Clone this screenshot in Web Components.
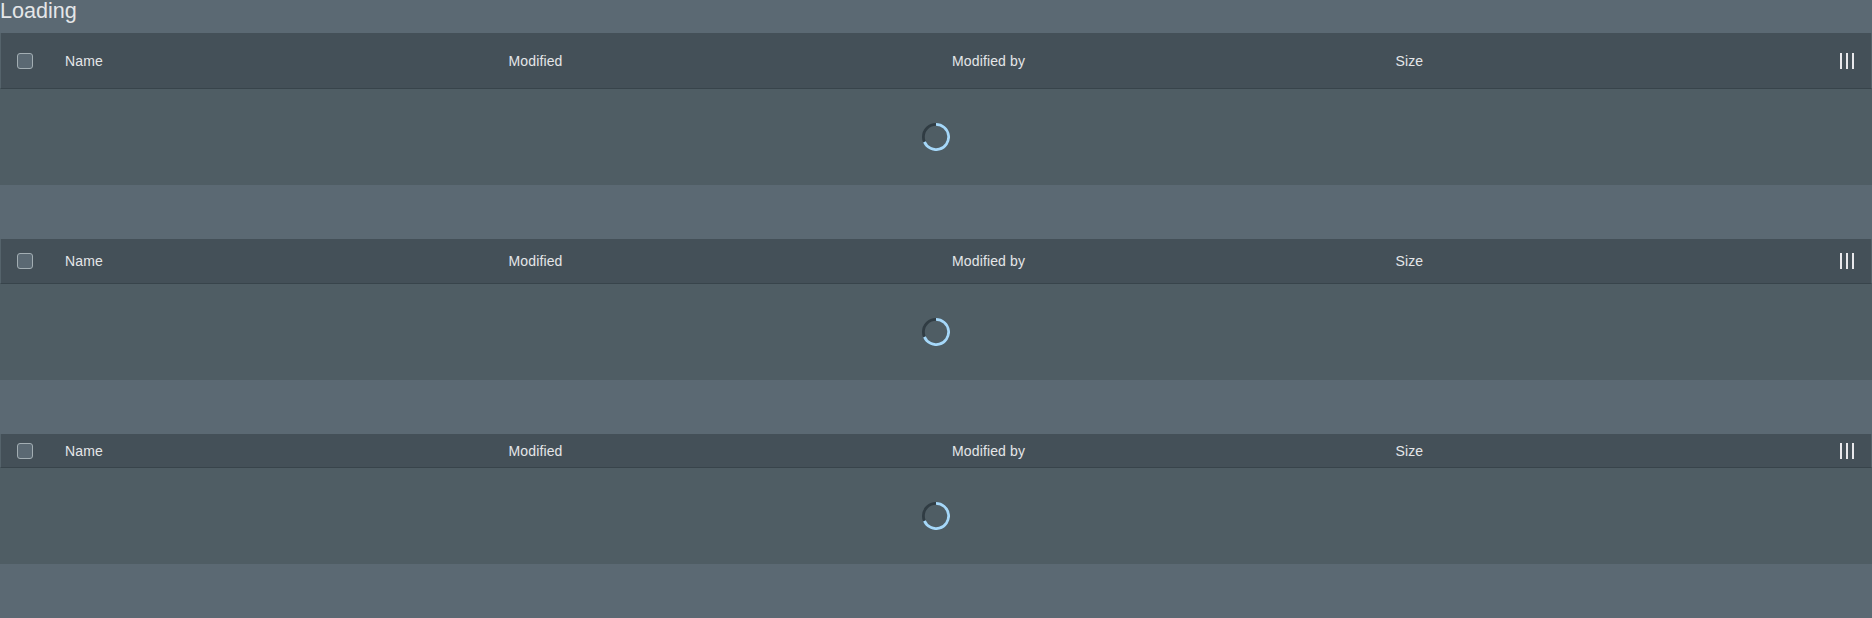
<!DOCTYPE html>
<html lang="en">
<head>
<meta charset="utf-8">
<title>Loading</title>
<style>
html, body { margin: 0; background: #5b6973; color: #e4e6e8; font-family: "Liberation Sans", Arial, sans-serif; }
</style>
</head>
<body>
<loading-page></loading-page>
<script>
const define = (name, html) => customElements.define(name, class extends HTMLElement {
  constructor() {
    super();
    this.attachShadow({ mode: "open" }).innerHTML = html;
  }
});

define("check-box", `<style>
:host { display: block; box-sizing: border-box; width: 16px; height: 16px; border: 1px solid #a3aeb3; border-radius: 3px; background: #5b6973; }
</style>`);

define("columns-icon", `<style>
:host { display: block; width: 16px; height: 16px; }
svg { display: block; fill: #e8e8eb; shape-rendering: crispEdges; }
</style><svg width="16" height="16" viewBox="0 0 16 16"><path d="M1 0h2v16H1zM7 0h2v16H7zM13 0h2v16h-2z"/></svg>`);

define("progress-spinner", `<style>
:host { display: block; width: 28px; height: 28px; }
svg { display: block; fill: none; stroke-width: 2.8; }
</style><svg width="28" height="28" viewBox="0 0 28 28"><circle cx="14" cy="14" r="12.6" stroke="#303c43"/><path d="M14 1.4A12.6 12.6 0 1 1 2.4 18.92" stroke="#a6d8f9"/></svg>`);

define("header-cell", `<style>
:host { display: block; min-width: 0; font-size: 14px; line-height: 16px; letter-spacing: 0.14px; }
</style><slot></slot>`);

define("table-header", `<style>
:host { box-sizing: border-box; height: var(--header-height, 56px); display: grid; grid-template-columns: 48px repeat(4, minmax(0, 1fr)) 16px; align-items: start; padding: var(--header-inset, 20px) 16px 0; border: 1px solid #55636b; border-width: 0 1px 1px; border-bottom-color: #38444b; background: #445058; }
</style><check-box></check-box><slot></slot><columns-icon></columns-icon>`);

define("loading-table", `<style>
:host { display: block; margin-bottom: 54px; background: #4f5d64; }
.body { height: 96px; display: grid; place-items: center; }
</style>
<table-header>
<header-cell>Name</header-cell><header-cell>Modified</header-cell><header-cell>Modified by</header-cell><header-cell>Size</header-cell>
</table-header>
<div class="body"><progress-spinner></progress-spinner></div>`);

define("loading-page", `<style>
:host { display: flow-root; }
h1 { margin: 0; height: 33px; font-size: 21.6px; font-weight: 400; line-height: 22px; }
.medium { --header-height: 45px; --header-inset: 14px; }
.small { --header-height: 34px; --header-inset: 9px; }
</style>
<h1>Loading</h1>
<loading-table></loading-table>
<loading-table class="medium"></loading-table>
<loading-table class="small"></loading-table>`);
</script>
</body>
</html>
